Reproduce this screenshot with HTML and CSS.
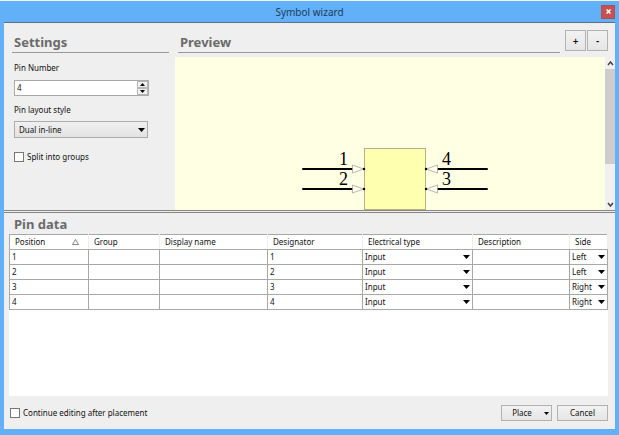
FILE: index.html
```
<!DOCTYPE html>
<html lang="en">
<head>
    <meta charset="UTF-8">
    <title>Symbol wizard</title>
    <link rel="stylesheet" href="styles.css">
</head>
<body>
    <div class="window">
        <header class="titlebar">
            <h1 class="titlebar-text">Symbol wizard</h1>
            <button type="button" class="close" aria-label="Close">
                <svg width="5" height="5" viewBox="0 0 5 5"><path d="M.5 .5l4 4M4.500 .5l-4 4"/></svg>
            </button>
        </header>
        <main class="content">
            <div class="upper">
                <section class="settings">
                    <h2 class="heading ruled">Settings</h2>
                    <div class="fields">
                        <label for="pin-number">Pin Number</label>
                        <div class="spinner">
                            <input type="text" id="pin-number" value="4">
                            <div class="spinner-btns">
                                <button type="button" aria-label="Increase"><svg width="5" height="3" viewBox="0 0 5 3"><path d="M0 3L2.500 0L5 3z"/></svg></button>
                                <button type="button" aria-label="Decrease"><svg width="5" height="3" viewBox="0 0 5 3"><path d="M0 0h5L2.500 3z"/></svg></button>
                            </div>
                        </div>
                        <label for="pin-layout">Pin layout style</label>
                        <div class="dropdown">
                            <select id="pin-layout">
                                <option>Dual in-line</option>
                                <option>Quad side</option>
                            </select>
                            <svg class="arrow" width="7" height="4" viewBox="0 0 7 4"><path d="M0 0h7L3.500 4z"/></svg>
                        </div>
                        <label class="check"><input type="checkbox">Split into groups</label>
                    </div>
                </section>
                <section class="preview">
                    <div class="preview-head">
                        <h2 class="heading ruled">Preview</h2>
                        <div class="zoom">
                            <button type="button" class="btn">+</button>
                            <button type="button" class="btn">-</button>
                        </div>
                    </div>
                    <div class="viewport">
                        <div class="canvas">
                            <svg class="symbol" width="188" height="63" viewBox="0 0 188 63">
                                <rect class="chip" x="63.500" y="1.500" width="61" height="61"/>
                                <path class="pin" d="M2 22H52M2 42H52M136 22H186M136 42H186"/>
                                <path class="tip" d="M51.500 18v8l11-4zM51.500 38v8l11-4zM136.500 18v8l-11-4zM136.500 38v8l-11-4z"/>
                                <g class="dot">
                                    <circle cx="63" cy="22" r="1.200"/>
                                    <circle cx="63" cy="42" r="1.200"/>
                                    <circle cx="125" cy="22" r="1.200"/>
                                    <circle cx="125" cy="42" r="1.200"/>
                                </g>
                                <text x="38" y="18">1</text>
                                <text x="38" y="38">2</text>
                                <text x="141" y="18">4</text>
                                <text x="141" y="38">3</text>
                            </svg>
                        </div>
                        <div class="scrollbar">
                            <svg width="7" height="5" viewBox="0 0 7 5"><path d="M1 4l2.500-3L6 4"/></svg>
                            <div class="track"><div class="thumb"></div></div>
                            <svg width="7" height="5" viewBox="0 0 7 5"><path d="M1 1l2.500 3L6 1"/></svg>
                        </div>
                    </div>
                </section>
            </div>
            <section class="lower">
                <h2 class="heading">Pin data</h2>
                <div class="grid">
                    <table>
                        <colgroup>
                            <col class="c-position"><col class="c-group"><col class="c-name"><col class="c-designator"><col class="c-type"><col><col class="c-side">
                        </colgroup>
                        <thead>
                            <tr>
                                <th><span class="sorted">Position<svg width="7" height="6" viewBox="0 0 7 6"><path d="M.5 5.500h6L3.500 .5z"/></svg></span></th>
                                <th>Group</th>
                                <th>Display name</th>
                                <th>Designator</th>
                                <th>Electrical type</th>
                                <th>Description</th>
                                <th>Side</th>
                            </tr>
                        </thead>
                        <tbody id="pins"></tbody>
                    </table>
                </div>
                <footer class="footer">
                    <label class="check"><input type="checkbox">Continue editing after placement</label>
                    <div class="actions">
                        <button type="button" class="btn place">Place<svg width="5" height="3" viewBox="0 0 5 3"><path d="M0 0h5L2.500 3z"/></svg></button>
                        <button type="button" class="btn">Cancel</button>
                    </div>
                </footer>
            </section>
        </main>
    </div>
    <script>
(function() {
    var sides = ["Left", "Left", "Right", "Right"],
        html = "";

    function dropdown(label, options, value) {
        return '<div class="dropdown"><select aria-label="' + label + '">' + options.map(function(o) {
            return "<option" + (o === value ? " selected" : "") + ">" + o + "</option>";
        }).join("") + '</select><svg class="arrow" width="7" height="4" viewBox="0 0 7 4"><path d="M0 0h7L3.500 4z"/></svg></div>';
    }

    sides.forEach(function(side, i) {
        var n = i + 1;
        html += "<tr><td>" + n + "</td><td></td><td></td><td>" + n + "</td><td>" +
            dropdown("Electrical type of pin " + n, ["Input", "Output"], "Input") +
            "</td><td></td><td>" +
            dropdown("Side of pin " + n, ["Left", "Right"], side) + "</td></tr>";
    });
    document.getElementById("pins").innerHTML = html;
})();
    </script>
</body>
</html>
```

FILE: styles.css
```
*{box-sizing:border-box;}
body{margin:0;font:8px/12px "Noto Sans","Open Sans",sans-serif;color:#111;}
h1,h2{margin:0;}
button,input,select{margin:0;padding:0;font:inherit;color:inherit;border-radius:0;}
svg{display:block;}

.window{display:flex;flex-direction:column;min-height:100vh;padding:0 4px 6px;background:#62b0f8;border-top:1px solid #eef6fc;}
.titlebar{display:grid;grid-template-columns:1fr auto 1fr;align-items:center;height:21px;}
.titlebar-text{grid-column:2;font-size:10px;line-height:16px;font-weight:400;color:#1c3c5c;}
.close{display:flex;align-items:center;justify-content:center;justify-self:end;width:14px;height:14px;border:1px solid #a8505c;background:#c75050;}
.close path{stroke:#fff;stroke-width:1.5;}

.content{flex:1;display:flex;flex-direction:column;background:#efefef;border-top:1px solid #5d7184;}
.heading{font-size:13px;line-height:18px;font-weight:700;color:#6b6b6b;}
.ruled{padding:0 2px 1px;border-bottom:1px solid #9a989c;}

.upper{display:grid;grid-template-columns:171px 1fr;height:187px;}
.settings{padding:10px 6px 0 8px;}
.fields{display:flex;flex-direction:column;align-items:flex-start;padding:9px 0 0 2px;}
.spinner{display:flex;width:135px;height:16px;margin:6px 0 8px;border:1px solid #aaa;background:#fff;}
.spinner input{flex:1;min-width:0;padding-left:2px;border:0;background:none;}
.spinner-btns{display:grid;width:11px;background:#e8e8e8;}
.spinner-btns button{display:flex;align-items:center;justify-content:center;border:1px solid #b8b8b8;background:#f0f0f0;}
.dropdown{display:grid;grid-template-columns:1fr auto;align-items:center;}
.dropdown select{grid-area:1/1/2/3;width:100%;height:100%;appearance:none;border:0;background:none;}
.dropdown .arrow{grid-area:1/2;margin-right:2px;pointer-events:none;}
.fields .dropdown{width:134px;height:17px;margin:5px 0 13px;border:1px solid #acacac;background:linear-gradient(#f0f0f0,#e3e3e3);}
.fields .dropdown select{padding-left:4px;}
.check{display:flex;align-items:center;gap:3px;}
.check input{appearance:none;width:10px;height:10px;border:1px solid #777;background:#fff;}
.check input:checked{background:#62b0f8;}

.preview{display:flex;flex-direction:column;min-width:0;}
.preview-head{display:flex;gap:5px;height:34px;padding:7px 7px 0 3px;}
.preview-head .heading{flex:1;height:20px;margin-top:3px;}
.zoom{display:flex;gap:1px;}
.btn{display:flex;align-items:center;justify-content:center;border:1px solid #b2b2b2;background:linear-gradient(#f2f2f2,#e6e6e6);}
.zoom .btn{width:21px;height:21px;font-size:10px;font-weight:600;}
.viewport{flex:1;display:flex;min-height:0;}
.canvas{flex:1;display:flex;justify-content:center;align-items:flex-end;padding-left:10px;background:#ffffe4;overflow:hidden;}
.symbol text{font:18px "Liberation Serif",serif;}
.chip{fill:#ffffb0;stroke:#b8ae88;}
.pin{stroke:#000;stroke-width:2;stroke-linecap:round;}
.tip{fill:#fffff0;stroke:#a09a90;stroke-width:.7;}
.scrollbar{display:flex;flex-direction:column;align-items:center;gap:3px;width:10px;padding:4px 0 3px;background:#f0f0f0;}
.scrollbar path{fill:none;stroke:#444;stroke-width:1.5;}
.track{flex:1;width:100%;}
.thumb{height:73%;background:#cdcdcd;}

.lower{flex:1;display:flex;flex-direction:column;padding:2px 7px 7px 5px;border-top:3px double #858585;}
.lower .heading{padding:0 5px;}
.grid{flex:1;background:#fff;margin-top:1px;}
table{width:100%;table-layout:fixed;border-collapse:collapse;}
.c-position{width:79px;}
.c-group{width:71px;}
.c-name{width:108px;}
.c-designator{width:95px;}
.c-type{width:110px;}
.c-side{width:38px;}
th,td{height:15px;padding:0 0 0 2px;border:1px solid #a8a8a8;text-align:left;line-height:14px;}
th{padding-left:5px;border-color:#a8a8a8 #eee;font-weight:400;}
th:first-child{border-left-color:#a8a8a8;}
.sorted{display:flex;align-items:center;justify-content:space-between;padding-right:9px;}
.sorted path{fill:none;stroke:#666;stroke-width:.8;}
td .dropdown{height:14px;}

.footer{display:flex;align-items:center;justify-content:space-between;padding:9px 0 1px 1px;}
.actions{display:flex;gap:5px;}
.actions .btn{width:51px;height:16px;}
.actions .place{gap:12px;padding-left:8px;}
```
